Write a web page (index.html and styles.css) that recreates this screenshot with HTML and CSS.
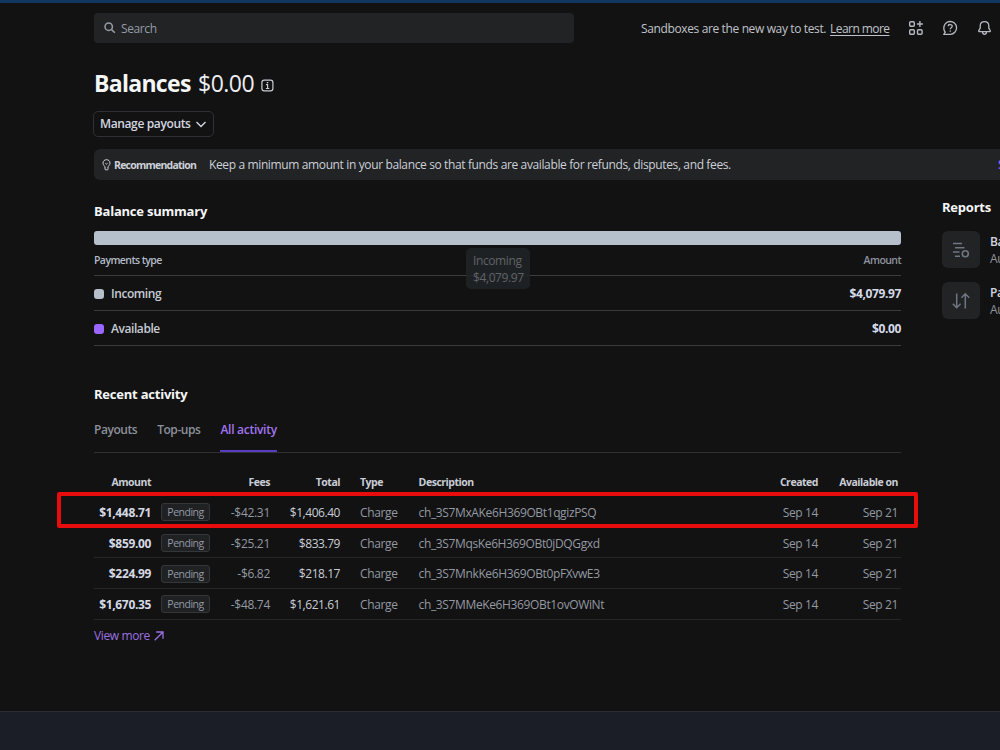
FILE: index.html
```html
<!DOCTYPE html>
<html lang="en">
<head>
<meta charset="utf-8">
<title>Balances</title>
<link rel="stylesheet" href="styles.css">
</head>
<body>
<div class="page">
  <header class="topbar">
    <div class="search">
      <svg width="12" height="12" viewBox="0 0 12 12" fill="none" stroke="currentColor" stroke-width="1.5"><circle cx="4.7" cy="4.7" r="3.7"/><path d="M7.4 7.4L10.8 10.8"/></svg>
      <span>Search</span>
    </div>
    <div class="notice"><span>Sandboxes are the new way to test.</span><a class="learn">Learn more</a></div>
    <nav class="tools">
      <svg width="16" height="16" viewBox="0 0 16 16" fill="none" stroke="currentColor" stroke-width="1.4"><rect x="1.7" y="1.7" width="4.6" height="4.6" rx="1"/><rect x="1.7" y="9.7" width="4.6" height="4.6" rx="1"/><rect x="9.5" y="9.7" width="4.6" height="4.6" rx="1"/><path d="M11.9 1v6M8.9 4h6"/></svg>
      <svg width="16" height="16" viewBox="0 0 16 16" fill="none" stroke="currentColor" stroke-width="1.3"><path d="M1.7 14.3H8.3A6.4 6.4 0 1 0 1.8 8.6C1.9 10.1 2.5 11.3 3.3 12.2Z" stroke-linejoin="round"/><path d="M6.1 6.2C6.2 3.9 10.3 4 10.2 6.3C10.1 7.7 8.2 7.7 8.2 9.3"/><circle cx="8.2" cy="11.1" r=".4" fill="currentColor" stroke-width=".8"/></svg>
      <svg width="16" height="16" viewBox="0 0 16 16" fill="none" stroke="currentColor" stroke-width="1.3"><path d="M8.5 1.6C5.8 1.6 4.2 3.5 4.2 6V8.2L2.7 10.7Q2.5 11.6 3.3 11.6H13.7Q14.5 11.6 14.3 10.7L12.8 8.2V6C12.8 3.5 11.2 1.6 8.5 1.6Z"/><path d="M6.5 11.9C6.7 15.1 10.3 15.1 10.5 11.9"/></svg>
    </nav>
  </header>

  <div class="title">
    <h1>Balances</h1><span class="total">$0.00</span>
    <svg width="13" height="13" viewBox="0 0 13 13" fill="none" stroke="currentColor" stroke-width="1.2"><rect x=".9" y="1.1" width="11" height="10.8" rx="2.3"/><path d="M5 5.7h1.6v4M4.9 9.5h3.4M5.8 3.6h1.5"/></svg>
  </div>
  <button class="manage"><span>Manage payouts</span>
    <svg width="10" height="7" viewBox="0 0 10 7" fill="none" stroke="currentColor" stroke-width="1.4"><path d="M.5 1L5 5.5L9.5 1"/></svg>
  </button>

  <div class="banner">
    <svg width="9" height="12" viewBox="0 0 9 12" fill="none" stroke="currentColor" stroke-width="1"><path d="M3 8.2C3 7 1 6.4 1 4.1C1 2 2.5.7 4.5.7S8 2 8 4.1C8 6.4 6 7 6 8.2M3.2 10.8h2.6M3 8V10.5M6 8V10.5M3.4 4.3L4.5 5.2L5.6 4.3"/></svg>
    <b>Recommendation</b>
    <span class="tip">Keep a minimum amount in your balance so that funds are available for refunds, disputes, and fees.</span>
    <a class="setup">Set up</a>
  </div>

  <div class="columns">
    <main class="main">
      <h2>Balance summary</h2>
      <div class="bar"><div class="tooltip"><span>Incoming</span><span>$4,079.97</span></div></div>
      <div class="sumrow sumhead"><span>Payments type</span><span class="muted">Amount</span></div>
      <div class="sumrow"><span class="key"><i class="dot"></i>Incoming</span><span class="num">$4,079.97</span></div>
      <div class="sumrow"><span class="key"><i class="dot purple"></i>Available</span><span class="num">$0.00</span></div>

      <h2 class="recent">Recent activity</h2>
      <div class="tabs"><span>Payouts</span><span>Top-ups</span><span class="active">All activity</span></div>

      <div class="table">
        <div class="row head"><span>Amount</span><span></span><span>Fees</span><span>Total</span><span>Type</span><span>Description</span><span>Created</span><span>Available on</span></div>
        <div class="row"><span>$1,448.71</span><span class="badge">Pending</span><span>-$42.31</span><span>$1,406.40</span><span>Charge</span><span>ch_3S7MxAKe6H369OBt1qgizPSQ</span><span>Sep 14</span><span>Sep 21</span><div class="highlight"></div></div>
        <div class="row"><span>$859.00</span><span class="badge">Pending</span><span>-$25.21</span><span>$833.79</span><span>Charge</span><span>ch_3S7MqsKe6H369OBt0jDQGgxd</span><span>Sep 14</span><span>Sep 21</span></div>
        <div class="row"><span>$224.99</span><span class="badge">Pending</span><span>-$6.82</span><span>$218.17</span><span>Charge</span><span>ch_3S7MnkKe6H369OBt0pFXvwE3</span><span>Sep 14</span><span>Sep 21</span></div>
        <div class="row"><span>$1,670.35</span><span class="badge">Pending</span><span>-$48.74</span><span>$1,621.61</span><span>Charge</span><span>ch_3S7MMeKe6H369OBt1ovOWiNt</span><span>Sep 14</span><span>Sep 21</span></div>
      </div>
      <a class="more"><span>View more</span>
        <svg width="10" height="10" viewBox="0 0 10 10" fill="none" stroke="currentColor" stroke-width="1.3"><path d="M.7 9.3L9 1M2.2 1H9V7.8"/></svg>
      </a>
    </main>

    <aside class="reports">
      <h2>Reports</h2>
      <div class="report">
        <div class="tile"><svg width="18" height="18" viewBox="0 0 18 18" fill="none" stroke="currentColor" stroke-width="1.6"><path d="M1 2.5h9M3 6.7h9.5M1 11h6.5M3 15.2h5"/><circle cx="13.3" cy="12.7" r="3"/></svg></div>
        <div class="meta"><b>Balance</b><span>Aug 1</span></div>
      </div>
      <div class="report">
        <div class="tile"><svg width="18" height="18" viewBox="0 0 18 18" fill="none" stroke="currentColor" stroke-width="1.5"><path d="M4.7 1.5V15.5M.8 11.8L4.7 15.7L8.6 11.8M13.3 16.5V2M9.4 5.7L13.3 1.8L17.2 5.7"/></svg></div>
        <div class="meta"><b>Payout</b><span>Aug 1</span></div>
      </div>
    </aside>
  </div>
</div>
<footer class="bottom"></footer>
</body>
</html>
```
FILE: styles.css
```css
* { box-sizing: border-box; }
body {
  margin: 0; width: 1000px; height: 750px; overflow: hidden;
  display: flex; flex-direction: column;
  background: #121212; color: #c6cbd4; border-top: 3px solid #12375f;
  font: 12px/16px "Open Sans", "Noto Sans", sans-serif;
  letter-spacing: -.37px; white-space: nowrap;
}
h1, h2 { margin: 0; color: #f5f6f8; }
h2 { font-size: 13px; line-height: 18px; font-weight: 700; letter-spacing: -.22px; }
svg { flex: none; display: block; }
.page { flex: 1; padding: 10px 0 0 94px; overflow: hidden; }

.topbar { display: flex; align-items: center; height: 30px; }
.search {
  width: 480px; height: 30px; padding-left: 10px; border-radius: 4px; margin-right: 67px;
  display: flex; align-items: center; gap: 5px; background: #212325; color: #979ca6;
}
.search span { padding-top: 1px; letter-spacing: -.4px; }
.notice { display: flex; gap: 4px; width: 249px; padding-top: 1px; color: #c0c3ca; }
.learn { text-decoration: underline; text-underline-offset: 2px; letter-spacing: -.57px; }
.tools { display: flex; gap: 18px; margin-left: 18px; color: #b4b8c0; }

.title { display: flex; align-items: center; height: 34px; margin-top: 23px; }
h1 { font-size: 23px; line-height: 34px; letter-spacing: -.7px; width: 104px; }
.total { font-size: 23px; color: #eceef2; width: 63px; letter-spacing: -.5px; }
.title svg { margin-top: 4px; }
.manage {
  display: flex; align-items: center; gap: 5px; width: 121px; height: 26px; margin: 11px 0 0 -1px; padding: 0 0 0 6px;
  background: none; border: 1px solid #2d3034; border-radius: 5px; color: #d2d6e0;
  font: 600 12px/16px "Open Sans", sans-serif; letter-spacing: -.37px;
}
.banner {
  display: flex; align-items: center; height: 31px; margin-top: 12px; padding-left: 8px;
  background: #212325; border-radius: 6px 0 0 6px; color: #cdd0d8;
}
.banner > * { flex: none; }
.banner b { font-size: 10.5px; font-weight: 700; letter-spacing: -.77px; margin-left: 3px; width: 95px; }
.tip { width: 789px; }
.setup { color: #8b5cf6; font-weight: 600; }

.columns { display: flex; gap: 41px; }
.main { width: 807px; flex: none; padding-top: 22px; }
.bar { position: relative; height: 14px; margin-top: 11px; background: #b6c0cd; border-radius: 3px; }
.tooltip {
  position: absolute; left: 372px; top: 17px; width: 64px; height: 41px; padding: 4px 7px;
  display: flex; flex-direction: column; line-height: 17px; border-radius: 5px; letter-spacing: -.4px;
  background: rgba(33, 37, 40, .85); color: #606367;
}
.sumrow {
  display: flex; justify-content: space-between; align-items: center; height: 35px; padding-top: 1px;
  border-bottom: 1px solid #3b3c3e; font-weight: 600; letter-spacing: -.43px;
}
.sumhead { height: 31px; padding-top: 0; font-size: 10.5px; letter-spacing: -.58px; color: #b4bac6; }
.muted { color: #8e939d; }
.key { display: flex; align-items: center; gap: 7px; }
.dot { width: 10px; height: 10px; border-radius: 3px; background: #b6c0cd; }
.purple { background: #9966ff; }
.num { color: #d5dae8; font-weight: 700; letter-spacing: -.38px; }

.recent { margin-top: 39px; }
.tabs { display: flex; gap: 20px; height: 39px; margin-top: 11px; border-bottom: 1px solid #303133; color: #8c919b; font-weight: 600; letter-spacing: -.45px; }
.tabs span { height: 38px; line-height: 32px; }
.tabs .active { color: #a275f0; border-bottom: 2px solid #593cc0; letter-spacing: -.27px; }

.table { padding-top: 15px; }
.row {
  position: relative; display: grid; align-items: center; height: 30.7px;
  grid-template-columns: 57px 10px 49px 60px 70px 20px 58px 310px 90px 80px;
  border-bottom: 1px solid #252627; color: #9499a3;
}
.row > span { padding-top: 2px; }
.row > :nth-child(1) { grid-column: 1; text-align: right; color: #d5d9e4; font-weight: 700; letter-spacing: -.35px; }
.row > :nth-child(2) { grid-column: 3; }
.row > :nth-child(3) { grid-column: 4; text-align: right; letter-spacing: -.3px; }
.row > :nth-child(4) { grid-column: 5; text-align: right; color: #c9cdd6; letter-spacing: -.45px; }
.row > :nth-child(5) { grid-column: 7; }
.row > :nth-child(6) { grid-column: 8; padding-left: .6px; }
.row > :nth-child(7) { grid-column: 9; text-align: right; margin-left: -60px; }
.row > :nth-child(8) { grid-column: 10; text-align: right; }
.row.head { height: 29px; border-bottom: 0; font-size: 10.5px; }
.row.head > span { padding-top: 0; padding-bottom: 1px; color: #c9cdd6; font-weight: 700; letter-spacing: -.47px; }
.row > .badge {
  height: 18px; margin-top: 1px; padding: 0; line-height: 17px; font-size: 10.5px; letter-spacing: -.5px; text-align: center;
  background: #1f2123; border: 1px solid #34373a; border-radius: 3px;
}
.highlight { position: absolute; left: -37px; top: -5px; width: 861px; height: 36px; border: 4px solid #e80c0c; border-radius: 2px; }
.more { display: flex; align-items: center; gap: 4px; margin-top: 8px; color: #9b71e0; }

.reports { padding-top: 18px; flex: none; width: 120px; }
.report { display: flex; gap: 10px; align-items: center; margin-bottom: 14px; }
.reports h2 { margin-bottom: 15px; }
.tile { width: 38px; height: 37px; flex: none; display: grid; place-items: center; background: #212325; border-radius: 6px; color: #6f7783; }
.meta { display: flex; flex-direction: column; line-height: 17px; color: #8e939d; }
.meta b { color: #d2d6e0; font-weight: 600; }
.bottom { height: 39px; background: #1b1e26; border-top: 1px solid #2a2d32; }
```
